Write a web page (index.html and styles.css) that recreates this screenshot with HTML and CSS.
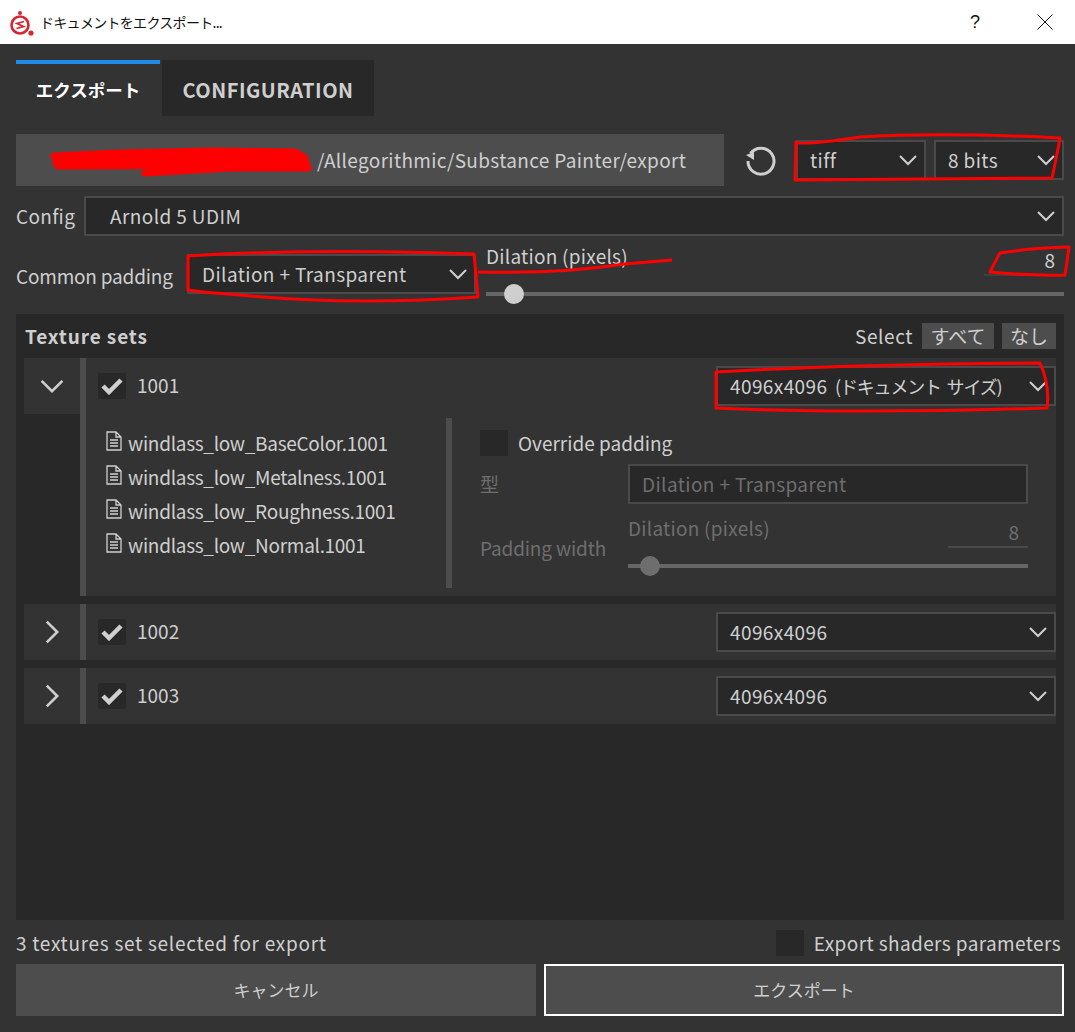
FILE: index.html
```html
<!DOCTYPE html>
<html lang="ja">
<head>
<meta charset="utf-8">
<title>ドキュメントをエクスポート...</title>
<link rel="stylesheet" href="styles.css">
</head>
<body>
<svg class="defs" width="0" height="0">
  <symbol id="chev" viewBox="0 0 20 12"><path d="M2 2l8 8 8-8" fill="none" stroke="currentColor" stroke-width="2"/></symbol>
  <symbol id="check" viewBox="0 0 22 18"><path d="M2 9l6 6L20 3" fill="none" stroke="currentColor" stroke-width="4.5"/></symbol>
  <symbol id="doc" viewBox="0 0 16 20"><path d="M1 1h9l5 5v13H1zM10 1v5h5M4 9h8M4 12h8M4 15h8" fill="none" stroke="currentColor" stroke-width="1.3"/></symbol>
</svg>
<header class="titlebar">
  <svg class="logo" width="26" height="26" viewBox="0 0 26 26">
    <circle cx="11" cy="15" r="8.500" fill="none" stroke="#d9252f" stroke-width="2.600"/>
    <circle cx="11" cy="3" r="2" fill="#d9252f"/>
    <circle cx="22" cy="23" r="2.600" fill="#d9252f"/>
    <path d="M15 11.500l-7 2 6.500 3-7 2" fill="none" stroke="#d9252f" stroke-width="1.800"/>
  </svg>
  <span class="title">ドキュメントをエクスポート...</span>
  <span class="help">?</span>
  <svg class="close" width="16" height="16" viewBox="0 0 16 16"><path d="M.5.500l15 15M15.500.500l-15 15" stroke="#111" fill="none"/></svg>
</header>
<main class="dialog">
  <nav class="tabs">
    <div class="tab tab-on">エクスポート</div>
    <div class="tab tab-off">CONFIGURATION</div>
  </nav>
  <section class="path-row">
    <div class="path">/Allegorithmic/Substance Painter/export</div>
    <svg class="reload" width="32" height="32" viewBox="0 0 32 32">
      <path d="M6.500 9.500A13 13 0 1 1 4 17" fill="none" stroke="#cfcfcf" stroke-width="3"/>
      <path d="M2 11l8-3 0 8z" fill="#cfcfcf"/>
    </svg>
    <div class="select sel-fmt">tiff<svg class="chev"><use href="#chev"/></svg></div>
    <div class="select sel-bits">8 bits<svg class="chev"><use href="#chev"/></svg></div>
  </section>
  <section class="config-row">
    <label class="lbl lbl-config">Config</label>
    <div class="select sel-config">Arnold 5 UDIM<svg class="chev"><use href="#chev"/></svg></div>
  </section>
  <section class="padding-row">
    <label class="lbl lbl-common">Common padding</label>
    <div class="select sel-padding">Dilation + Transparent<svg class="chev"><use href="#chev"/></svg></div>
    <div class="dilation">
      <div class="dil-head"><span class="dil-label">Dilation (pixels)</span><span class="num">8</span></div>
      <div class="slider"><span class="thumb"></span></div>
    </div>
  </section>
  <section class="sets">
    <div class="sets-head">
      <strong class="sets-title">Texture sets</strong>
      <span class="sets-select">Select</span>
      <span class="mini mini-all">すべて</span>
      <span class="mini mini-none">なし</span>
    </div>
    <article class="set set-open">
      <div class="toggle"><svg class="tog-open"><use href="#chev"/></svg></div>
      <div class="set-body">
        <div class="set-line">
          <span class="box"><svg class="tick"><use href="#check"/></svg></span>
          <span class="set-name">1001</span>
          <div class="select sel-size">4096x4096 <span class="size-note">(ドキュメント サイズ)</span><svg class="chev"><use href="#chev"/></svg></div>
        </div>
        <div class="details">
          <ul class="files">
            <li><svg class="doc"><use href="#doc"/></svg>windlass_low_BaseColor.1001</li>
            <li><svg class="doc"><use href="#doc"/></svg>windlass_low_Metalness.1001</li>
            <li><svg class="doc"><use href="#doc"/></svg>windlass_low_Roughness.1001</li>
            <li><svg class="doc"><use href="#doc"/></svg>windlass_low_Normal.1001</li>
          </ul>
          <div class="override">
            <div class="ov-check"><span class="box"></span><span>Override padding</span></div>
            <div class="ov-type"><span class="dim ov-label">型</span><div class="ov-input">Dilation + Transparent</div></div>
            <div class="ov-width">
              <span class="dim ov-label ov-label-w">Padding width</span>
              <div class="ov-dil">
                <div class="dil-head dil-head-dim dim"><span class="dil-label">Dilation (pixels)</span><span class="num num-dim">8</span></div>
                <div class="slider slider-dim"><span class="thumb"></span></div>
              </div>
            </div>
          </div>
        </div>
      </div>
    </article>
    <article class="set">
      <div class="toggle"><svg class="tog-closed"><use href="#chev"/></svg></div>
      <div class="set-body"><div class="set-line">
        <span class="box"><svg class="tick"><use href="#check"/></svg></span>
        <span class="set-name">1002</span>
        <div class="select sel-size">4096x4096<svg class="chev"><use href="#chev"/></svg></div>
      </div></div>
    </article>
    <article class="set">
      <div class="toggle"><svg class="tog-closed"><use href="#chev"/></svg></div>
      <div class="set-body"><div class="set-line">
        <span class="box"><svg class="tick"><use href="#check"/></svg></span>
        <span class="set-name">1003</span>
        <div class="select sel-size">4096x4096<svg class="chev"><use href="#chev"/></svg></div>
      </div></div>
    </article>
  </section>
  <section class="status">
    <span class="status-text">3 textures set selected for export</span>
    <span class="box box-export"></span>
    <span class="status-export">Export shaders parameters</span>
  </section>
  <section class="actions">
    <button class="btn">キャンセル</button>
    <button class="btn btn-primary">エクスポート</button>
  </section>
</main>
<svg class="marks" width="1075" height="1032" viewBox="0 0 1075 1032">
  <path class="redact" d="M54 156L120 153L210 151L295 152L305 158L210 155L100 160L56 163L120 165L210 160L305 160L308 168L230 168L145 173"/>
  <path class="redact" d="M56 160L300 155M58 166L305 165M110 156L290 163"/>
  <path class="ink" d="M796 142Q800 146 860 137Q940 132 1060 138Q1056 160 1052 178Q900 179 795 180Z"/>
  <path class="ink" d="M188 256Q320 248 474 254L478 297Q350 306 240 295Q200 292 188 290Z"/>
  <path class="ink" d="M478 272Q560 274 625 264L672 260"/>
  <path class="ink" d="M1069 247Q1030 248 1000 253Q995 262 990 272Q1030 276 1065 275Z"/>
  <path class="ink" d="M716 372Q850 364 1040 363Q1050 385 1047 408Q850 414 716 408Z"/>
</svg>
</body>
</html>
```
FILE: styles.css
```css
* { box-sizing: border-box; }
html, body { margin: 0; height: 1032px; overflow: hidden; }
body {
  position: relative;
  background: #333;
  color: #cfcfcf;
  font: 19px/24px "Noto Sans CJK JP", "Noto Sans", sans-serif;
}
.defs { position: absolute; }
.titlebar {
  height: 44px;
  background: #fff;
  display: flex;
  align-items: center;
  padding: 0 22px 0 9px;
  color: #111;
}
.logo { flex: none; margin-right: 5px; margin-top: 1px; }
.title { font-size: 14px; letter-spacing: -.7px; flex: 1; }
.help { font-size: 18px; margin-right: 57px; font-family: "Liberation Sans", sans-serif; }
.dialog { padding: 16px 11px 0 16px; }

.tabs { display: flex; gap: 2px; height: 56px; }
.tab { display: flex; align-items: center; justify-content: center; font-weight: 700; font-size: 20px; }
.tab-on { width: 144px; border-top: 4px solid #1e8ae8; color: #fff; font-size: 17.5px; }
.tab-off { width: 212px; background: #282828; letter-spacing: .5px; padding-top: 4px; }

.path-row { display: flex; align-items: center; height: 52px; margin-top: 18px; }
.path {
  width: 708px; height: 52px; background: #4d4d4d;
  display: flex; align-items: center; padding-left: 301px; letter-spacing: .35px;
}
.reload { margin: 0 20px; flex: none; }
.select {
  position: relative;
  background: #282828;
  border: 2px solid #4a4a4a;
  height: 40px;
  display: flex;
  align-items: center;
  padding-left: 12px;
  flex: none;
  letter-spacing: .4px;
  white-space: pre;
}
.chev { position: absolute; right: 6px; top: 12px; width: 20px; height: 12px; color: #cfcfcf; }
.sel-fmt { width: 130px; }
.sel-bits { width: 130px; margin-left: 8px; }

.config-row { display: flex; align-items: center; margin-top: 10px; height: 40px; }
.lbl { flex: none; }
.lbl-config { width: 68px; letter-spacing: .3px; }
.sel-config { width: 980px; padding-left: 24px; }

.padding-row { display: flex; align-items: flex-end; margin-top: 8px; height: 58px; }
.lbl-common { width: 171px; padding-bottom: 14px; letter-spacing: -.2px; }
.sel-padding { width: 289px; margin-bottom: 8px; margin-right: 10px; padding-left: 13px; }
.dilation { width: 578px; }
.dil-head { display: flex; justify-content: space-between; align-items: flex-end; height: 32px; }
.dil-label { align-self: flex-start; letter-spacing: .25px; }
.num { width: 80px; text-align: right; padding-right: 9px; border-bottom: 2px solid #404040; height: 26px; line-height: 20px; }
.slider { position: relative; height: 4px; background: #666; margin-top: 16px; margin-bottom: 6px; }
.thumb {
  position: absolute; left: 18px; top: -8px;
  width: 20px; height: 20px; border-radius: 50%; background: #cfcfcf;
}

.sets { background: #282828; height: 606px; margin-top: 12px; padding: 0 8px; }
.sets-head { height: 44px; display: flex; align-items: center; }
.sets-title { font-weight: 700; flex: 1; font-size: 19px; letter-spacing: .9px; margin-left: 1px; }
.sets-select { margin-right: 9px; letter-spacing: .6px; }
.mini { background: #4d4d4d; height: 26px; display: flex; align-items: center; justify-content: center; }
.mini-all { width: 72px; margin-right: 8px; }
.mini-none { width: 54px; }

.set { display: flex; margin-bottom: 8px; }
.toggle { width: 56px; height: 56px; background: #333; flex: none; display: flex; align-items: center; justify-content: center; color: #cfcfcf; }
.tog-open { width: 26px; height: 16px; }
.tog-closed { width: 26px; height: 16px; transform: rotate(-90deg); }
.set-body { flex: 1; background: #333; border-left: 6px solid #4d4d4d; }
.set-line { height: 56px; display: flex; align-items: center; padding-left: 12px; }
.box { width: 28px; height: 26px; background: #282828; flex: none; display: flex; align-items: center; justify-content: center; color: #cfcfcf; }
.tick { width: 22px; height: 18px; }
.set-name { margin-left: 11px; flex: 1; margin-top: -2px; }
.sel-size { width: 340px; }
.size-note { font-size: 18px; letter-spacing: -1.2px; word-spacing: 3px; margin-left: 3px; }

.details { display: flex; height: 182px; }
.files { list-style: none; margin: 4px 0 0; padding: 8px 0 0 20px; width: 366px; border-right: 6px solid #4d4d4d; height: 170px; letter-spacing: -.3px; }
.files li { display: flex; align-items: center; height: 34px; }
.doc { width: 16px; height: 20px; margin-right: 6px; margin-top: -4px; }

.override { flex: 1; padding: 16px 28px 0 28px; }
.ov-check { display: flex; align-items: center; gap: 10px; height: 26px; }
.ov-type { display: flex; align-items: center; margin-top: 8px; height: 40px; }
.ov-label { width: 148px; flex: none; letter-spacing: -.15px; }
.dim { color: #6e6e6e; }
.ov-input { flex: 1; height: 40px; background: #282828; border: 2px solid #4a4a4a; color: #6e6e6e; display: flex; align-items: center; padding-left: 12px; letter-spacing: .4px; }
.ov-width { display: flex; align-items: flex-end; margin-top: 8px; }
.ov-label-w { padding-bottom: 8px; }
.ov-dil { flex: 1; }
.dil-head-dim { height: 36px; }
.dil-head-dim .dil-label { margin-top: 4px; }
.num-dim { border-bottom-color: #4a4a4a; }
.slider-dim { margin-bottom: 0; }
.slider-dim .thumb { background: #6e6e6e; left: 12px; }

.status { display: flex; align-items: center; height: 26px; margin-top: 10px; }
.status-text { flex: 1; letter-spacing: .72px; }
.status-export { letter-spacing: .4px; margin-right: 3px; }
.box-export { margin-right: 10px; }
.actions { display: flex; gap: 8px; margin-top: 8px; }
.btn {
  width: 520px; height: 52px; background: #4d4d4d; border: 0; color: #cfcfcf;
  font: inherit; font-size: 17px; padding: 0;
}
.btn-primary { border: 2px solid #fff; }

.marks { position: absolute; left: 0; top: 0; pointer-events: none; }
.ink { fill: none; stroke: #f00; stroke-width: 3; stroke-linejoin: round; }
.redact { fill: none; stroke: #f00; stroke-width: 7; stroke-linejoin: round; stroke-linecap: round; }
```
